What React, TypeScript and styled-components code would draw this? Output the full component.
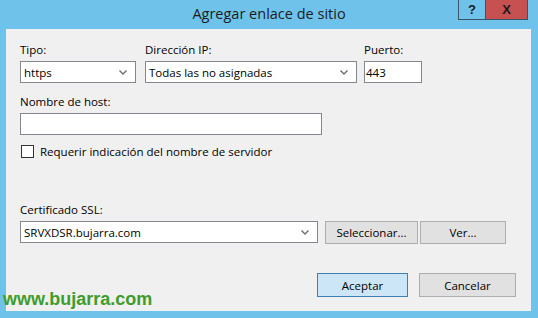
import React from "react";
import styled, { createGlobalStyle } from "styled-components";

const GlobalStyle = createGlobalStyle`
  html, body { margin: 0; padding: 0; }
  body {
    background: #6fc3eb;
    font-family: "Open Sans", "Noto Sans", sans-serif;
    font-size: 11.5px;
    color: #000;
  }
`;

const Window = styled.div`
  position: relative;
  width: 538px;
  height: 318px;
  background: #6fc3eb;
  display: flex;
  flex-direction: column;
  overflow: hidden;
`;

const TitleBar = styled.div`
  height: 29px;
  display: grid;
  grid-template-columns: 1fr auto 1fr;
  align-items: start;
`;

const Title = styled.div`
  grid-column: 2;
  font-size: 14.5px;
  line-height: 20px;
  padding-top: 4px;
  color: #1c1c1c;
  white-space: nowrap;
`;

const CaptionButtons = styled.div`
  grid-column: 3;
  justify-self: end;
  display: flex;
  margin-right: 10px;
`;

const CaptionButton = styled.div<{ $close?: boolean }>`
  height: 20px;
  width: ${(p) => (p.$close ? 42 : 28)}px;
  box-sizing: border-box;
  display: flex;
  align-items: center;
  justify-content: center;
  background: ${(p) => (p.$close ? "#c75050" : "#6fc3eb")};
  border: 1px solid #3a5468;
  border-top: none;
  ${(p) => (p.$close ? "border-left: none;" : "")}
  font-family: "Liberation Sans", Arial, sans-serif;
  font-weight: bold;
  font-size: 13px;
  color: #1a1a1a;
`;

const Panel = styled.div`
  flex: 1;
  margin: 0 7px 7px 6px;
  background: #f0f0f0;
  padding: 13px 15px 14px 14px;
  display: flex;
  flex-direction: column;
`;

const Row = styled.div<{ $gap?: number; $top?: number; $end?: boolean }>`
  display: flex;
  align-items: flex-start;
  gap: ${(p) => p.$gap ?? 0}px;
  margin-top: ${(p) => p.$top ?? 0}px;
  ${(p) => (p.$end ? "justify-content: flex-end; margin-top: auto;" : "")}
`;

const Field = styled.div<{ $w: number; $ml?: number }>`
  display: flex;
  flex-direction: column;
  gap: 4px;
  width: ${(p) => p.$w}px;
  margin-left: ${(p) => p.$ml ?? 0}px;
`;

const Label = styled.div`
  line-height: 15px;
  white-space: nowrap;
`;

const Combo = styled.div`
  box-sizing: border-box;
  height: 22px;
  width: 100%;
  background: #fff;
  border: 1px solid #828790;
  display: flex;
  align-items: center;
  padding: 0 8px 0 3px;
  line-height: 15px;
`;

const ComboText = styled.span`
  flex: 1;
  white-space: nowrap;
`;

const TextBox = styled.div<{ $pad?: number }>`
  box-sizing: border-box;
  height: 22px;
  width: 100%;
  background: #fff;
  border: 1px solid #828790;
  display: flex;
  align-items: center;
  padding-left: ${(p) => p.$pad ?? 2}px;
  line-height: 15px;
`;

const CheckRow = styled.label`
  display: flex;
  align-items: center;
  gap: 6px;
  line-height: 15px;
  padding-left: 1px;
`;

const CheckBox = styled.span`
  box-sizing: border-box;
  width: 13px;
  height: 13px;
  background: #fff;
  border: 1px solid #333;
`;

const Button = styled.div<{ $w: number; $h?: number; $primary?: boolean }>`
  box-sizing: border-box;
  width: ${(p) => p.$w}px;
  height: ${(p) => p.$h ?? 23}px;
  display: flex;
  align-items: center;
  justify-content: center;
  background: ${(p) => (p.$primary ? "#cde6f7" : "#e1e1e1")};
  border: 1px solid ${(p) => (p.$primary ? "#3c7fb1" : "#adadad")};
  line-height: 15px;
`;

const Watermark = styled.div`
  position: absolute;
  left: 3px;
  top: 288px;
  font-family: "Liberation Sans", Arial, sans-serif;
  font-weight: bold;
  font-size: 18px;
  line-height: 22px;
  color: #3f9c2b;
  white-space: nowrap;
`;

const Chevron = () => (
  <svg width="8" height="5" viewBox="0 0 8 5">
    <polyline points="0.5,0.5 4,4 7.5,0.5" fill="none" stroke="#6d6d6d" strokeWidth="1.4" />
  </svg>
);

export default function App() {
  return (
    <>
      <GlobalStyle />
      <Window>
        <TitleBar>
          <Title>Agregar enlace de sitio</Title>
          <CaptionButtons>
            <CaptionButton>?</CaptionButton>
            <CaptionButton $close>X</CaptionButton>
          </CaptionButtons>
        </TitleBar>
        <Panel>
          <Row>
            <Field $w={116}>
              <Label>Tipo:</Label>
              <Combo>
                <ComboText>https</ComboText>
                <Chevron />
              </Combo>
            </Field>
            <Field $w={212} $ml={9}>
              <Label>Dirección IP:</Label>
              <Combo>
                <ComboText>Todas las no asignadas</ComboText>
                <Chevron />
              </Combo>
            </Field>
            <Field $w={58} $ml={7}>
              <Label>Puerto:</Label>
              <TextBox $pad={1}>443</TextBox>
            </Field>
          </Row>
          <Row $top={11}>
            <Field $w={302}>
              <Label>Nombre de host:</Label>
              <TextBox />
            </Field>
          </Row>
          <Row $top={9}>
            <CheckRow>
              <CheckBox />
              Requerir indicación del nombre de servidor
            </CheckRow>
          </Row>
          <Row $top={43} $gap={7}>
            <Field $w={298}>
              <Label>Certificado SSL:</Label>
              <Combo>
                <ComboText>SRVXDSR.bujarra.com</ComboText>
                <Chevron />
              </Combo>
            </Field>
            <Row $gap={2} $top={19}>
              <Button $w={93}>Seleccionar...</Button>
              <Button $w={86}>Ver...</Button>
            </Row>
          </Row>
          <Row $end $gap={11}>
            <Button $w={91} $h={24} $primary>
              Aceptar
            </Button>
            <Button $w={97} $h={24}>
              Cancelar
            </Button>
          </Row>
        </Panel>
        <Watermark>www.bujarra.com</Watermark>
      </Window>
    </>
  );
}
